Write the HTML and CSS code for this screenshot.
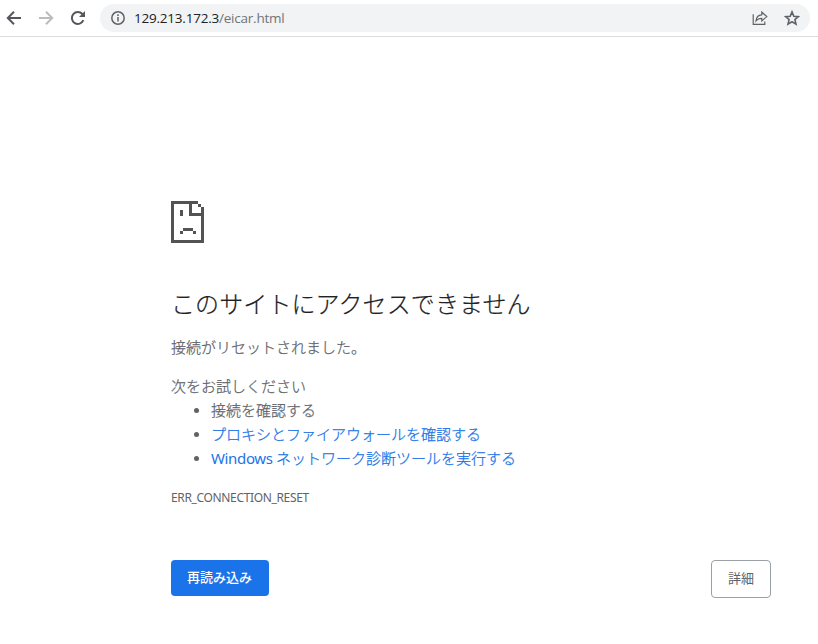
FILE: index.html
```
<!DOCTYPE html>
<html lang="ja">
<head>
<meta charset="utf-8">
<title>129.213.172.3</title>
<link rel="stylesheet" href="styles.css">
</head>
<body>
<header class="toolbar">
  <nav class="nav">
    <svg class="icon" viewBox="0 0 16 16"><path d="M15 8H2.2M8 1.8 1.8 8 8 14.2"/></svg>
    <svg class="icon disabled" viewBox="0 0 16 16"><path d="M1 8h12.8M8 1.8 14.2 8 8 14.2"/></svg>
    <svg class="icon" viewBox="0 0 16 16"><path d="M13.4 10.2A6 6 0 1 1 12.4 4L14 5.6"/><path class="solid" d="M15 1v6H9z"/></svg>
  </nav>
  <div class="omnibox">
    <svg class="info" viewBox="0 0 14 14"><circle cx="7" cy="7" r="6.2"/><path d="M7 6v4.4M7 3.3v1.6"/></svg>
    <span class="url">129.213.172.3<span class="path">/eicar.html</span></span>
    <svg class="share" viewBox="0 0 16 16"><path d="M1.2 4.2v10.2h11.6v-2.8M4 11c.3-4 2.2-6 5.8-6.2V2.2L14.8 6.600l-5 4.300V8.300C7.200 8.300 5.300 9.200 4 11z"/></svg>
    <svg class="star" viewBox="0 0 16 16"><path d="m8 1.900 1.800 4.300 4.600.4-3.500 3 1.100 4.500L8 11.700l-4 2.400 1.100-4.500-3.500-3 4.600-.4z"/></svg>
  </div>
</header>
<main class="page">
  <svg class="sad" viewBox="0 0 33 42" shape-rendering="crispEdges"><path d="M0 0h27v3H0zM0 3h3v39H0zM3 39h30v3H3zM30 6h3v33h-3zM27 3h3v3h-3zM18 3h3v12h-3zM21 12h9v3h-9zM9 9h3v6H9zM12 27h10v3H12zM9 30h3v3H9zM22 30h3v3h-3z"/></svg>
  <h1>このサイトにアクセスできません</h1>
  <p class="summary">接続がリセットされました。</p>
  <p class="try">次をお試しください</p>
  <ul>
    <li>接続を確認する</li>
    <li><a>プロキシとファイアウォールを確認する</a></li>
    <li><a><span class="latin">Windows</span> ネットワーク診断ツールを実行する</a></li>
  </ul>
  <p class="code">ERR_CONNECTION_RESET</p>
  <div class="actions">
    <button class="primary">再読み込み</button>
    <button class="secondary">詳細</button>
  </div>
</main>
</body>
</html>
```
FILE: styles.css
```
* { box-sizing: border-box; }
body {
  margin: 0;
  height: 644px;
  overflow: hidden;
  background: #fff;
  color: #5f6368;
  font: 15px/24px "Open Sans", "Noto Sans CJK JP", sans-serif;
}
.toolbar {
  display: flex;
  align-items: center;
  height: 37px;
  padding: 0 8px 1px 6px;
  border-bottom: 1px solid #dadce0;
}
.nav { display: flex; gap: 16px; width: 94px; }
svg { display: block; flex: none; fill: none; stroke: #5f6368; }
.icon { width: 16px; height: 16px; stroke: #54585d; stroke-width: 2; }
.icon .solid { fill: #54585d; stroke: none; }
.icon.disabled { stroke: #babcbe; }
.omnibox {
  display: flex;
  align-items: center;
  flex: 1;
  height: 28px;
  padding: 0 10px 0 11px;
  border-radius: 14px;
  background: #f1f3f4;
}
.info { width: 14px; height: 14px; stroke-width: 1.5; }
.url { margin-left: 9px; flex: 1; color: #202124; font-size: 13.5px; letter-spacing: -0.22px; white-space: nowrap; }
.path { color: #70757a; }
.share { width: 16px; height: 16px; stroke-width: 1.2; }
.star { width: 16px; height: 16px; margin-left: 16px; stroke-width: 1.6; }
.page { width: 600px; margin: 164px 0 0 171px; }
.sad { width: 33px; height: 42px; fill: #535353; stroke: none; }
h1 {
  margin: 45px 0 0;
  color: #202124;
  font: 300 24px/30px "Noto Sans CJK JP", sans-serif;
  letter-spacing: 0.1px;
  -webkit-text-stroke: 0.2px;
  white-space: nowrap;
}
p { margin: 0; }
.summary, .try, ul { font-family: "Noto Sans CJK JP", sans-serif; font-weight: 300; -webkit-text-stroke: 0.25px; }
.summary { margin-top: 17px; }
.try { margin-top: 15px; }
ul { margin: 0; padding: 0 0 0 40px; }
li::marker { font-family: "Liberation Sans", sans-serif; font-size: 17px; }
a { color: #1a73e8; }
.latin { font-family: "Noto Sans", sans-serif; font-weight: 400; letter-spacing: -0.35px; -webkit-text-stroke: 0; }
.code { margin-top: 16px; font-family: "Noto Sans", sans-serif; font-size: 12px; letter-spacing: -0.35px; }
.actions { display: flex; justify-content: space-between; align-items: flex-start; margin-top: 50px; }
button {
  height: 36px;
  padding: 0;
  border: 0;
  border-radius: 4px;
  font: 400 13px/16px "Noto Sans CJK JP", sans-serif;
}
.primary { width: 98px; padding: 0 1px 2px 0; background: #1a73e8; color: #fff; font-weight: 500; }
.secondary { width: 60px; height: 38px; padding-bottom: 2px; border: 1px solid #9aa0a6; background: #fff; color: #5f6368; }
```
